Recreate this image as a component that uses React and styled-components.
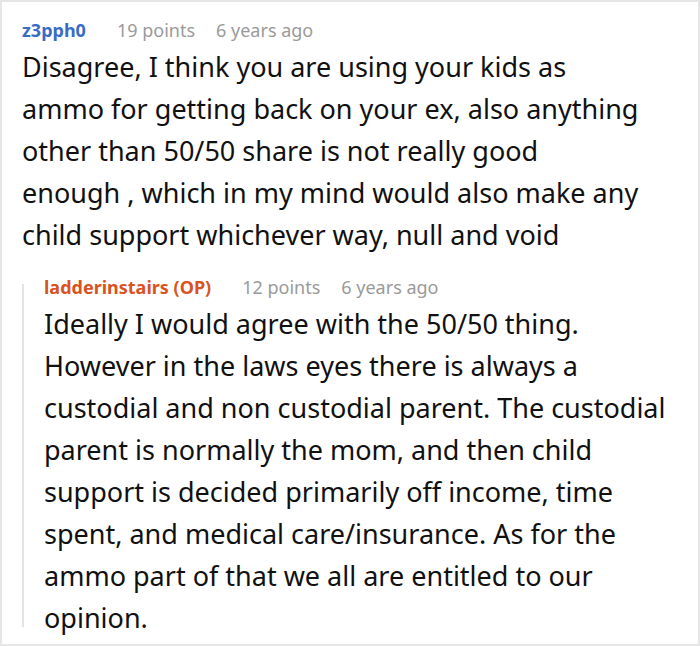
import React from 'react';
import styled, { createGlobalStyle } from 'styled-components';

const GlobalStyle = createGlobalStyle`
    html, body {
        margin: 0;
        padding: 0;
        background: #fff;
    }
    body {
        font-family: 'Noto Sans', 'Open Sans', sans-serif;
    }
`;

const Card = styled.div`
    width: 700px;
    height: 646px;
    box-sizing: border-box;
    border: 2px solid #e6e6e6;
    padding: 15px 20px 0 20px;
    overflow: hidden;
`;

const Comment = styled.div`
    display: flex;
    flex-direction: column;
`;

// thread rule runs a little shorter than the reply it sits beside
const Replies = styled.div`
    display: flex;
    flex-direction: column;
    margin-top: 28px;
    border-left: 2px solid #e4e4e4;
    padding-left: 20px;

    > ${Comment} {
        margin: -10px 0 -12px;
    }
`;

const Meta = styled.div`
    display: flex;
    align-items: baseline;
    gap: 21px;
    font-size: 18px;
    line-height: 26px;
    margin-bottom: 3px;
`;

const Author = styled.span`
    font-weight: 700;
    color: ${(p) => (p.$op ? '#d9531f' : '#3a6cc4')};
    margin-right: 10px;
`;

const Info = styled.span`
    color: #9a9a9a;
`;

const Body = styled.p`
    margin: 0;
    max-width: ${(p) => p.$width || 'none'};
    font-size: 27px;
    line-height: 42px;
    color: #111;
`;

const Entry = ({ author, op, points, age, width, children }) => (
    <Comment>
        <Meta>
            <Author $op={op}>{author}</Author>
            <Info>{points} points</Info>
            <Info>{age}</Info>
        </Meta>
        <Body $width={width}>{children}</Body>
    </Comment>
);

const App = () => (
    <>
        <GlobalStyle />
        <Card>
            <Entry author="z3pph0" points={19} age="6 years ago" width="618px">
                Disagree, I think you are using your kids as ammo for getting back on your ex, also anything other than 50/50 share is not really good enough , which in my mind would also make any child support whichever way, null and void
            </Entry>
            <Replies>
                <Entry author="ladderinstairs (OP)" op points={12} age="6 years ago">
                    Ideally I would agree with the 50/50 thing. However in the laws eyes there is always a custodial and non custodial parent. The custodial parent is normally the mom, and then child support is decided primarily off income, time spent, and medical care/insurance. As for the ammo part of that we all are entitled to our opinion.
                </Entry>
            </Replies>
        </Card>
    </>
);

export default App;
